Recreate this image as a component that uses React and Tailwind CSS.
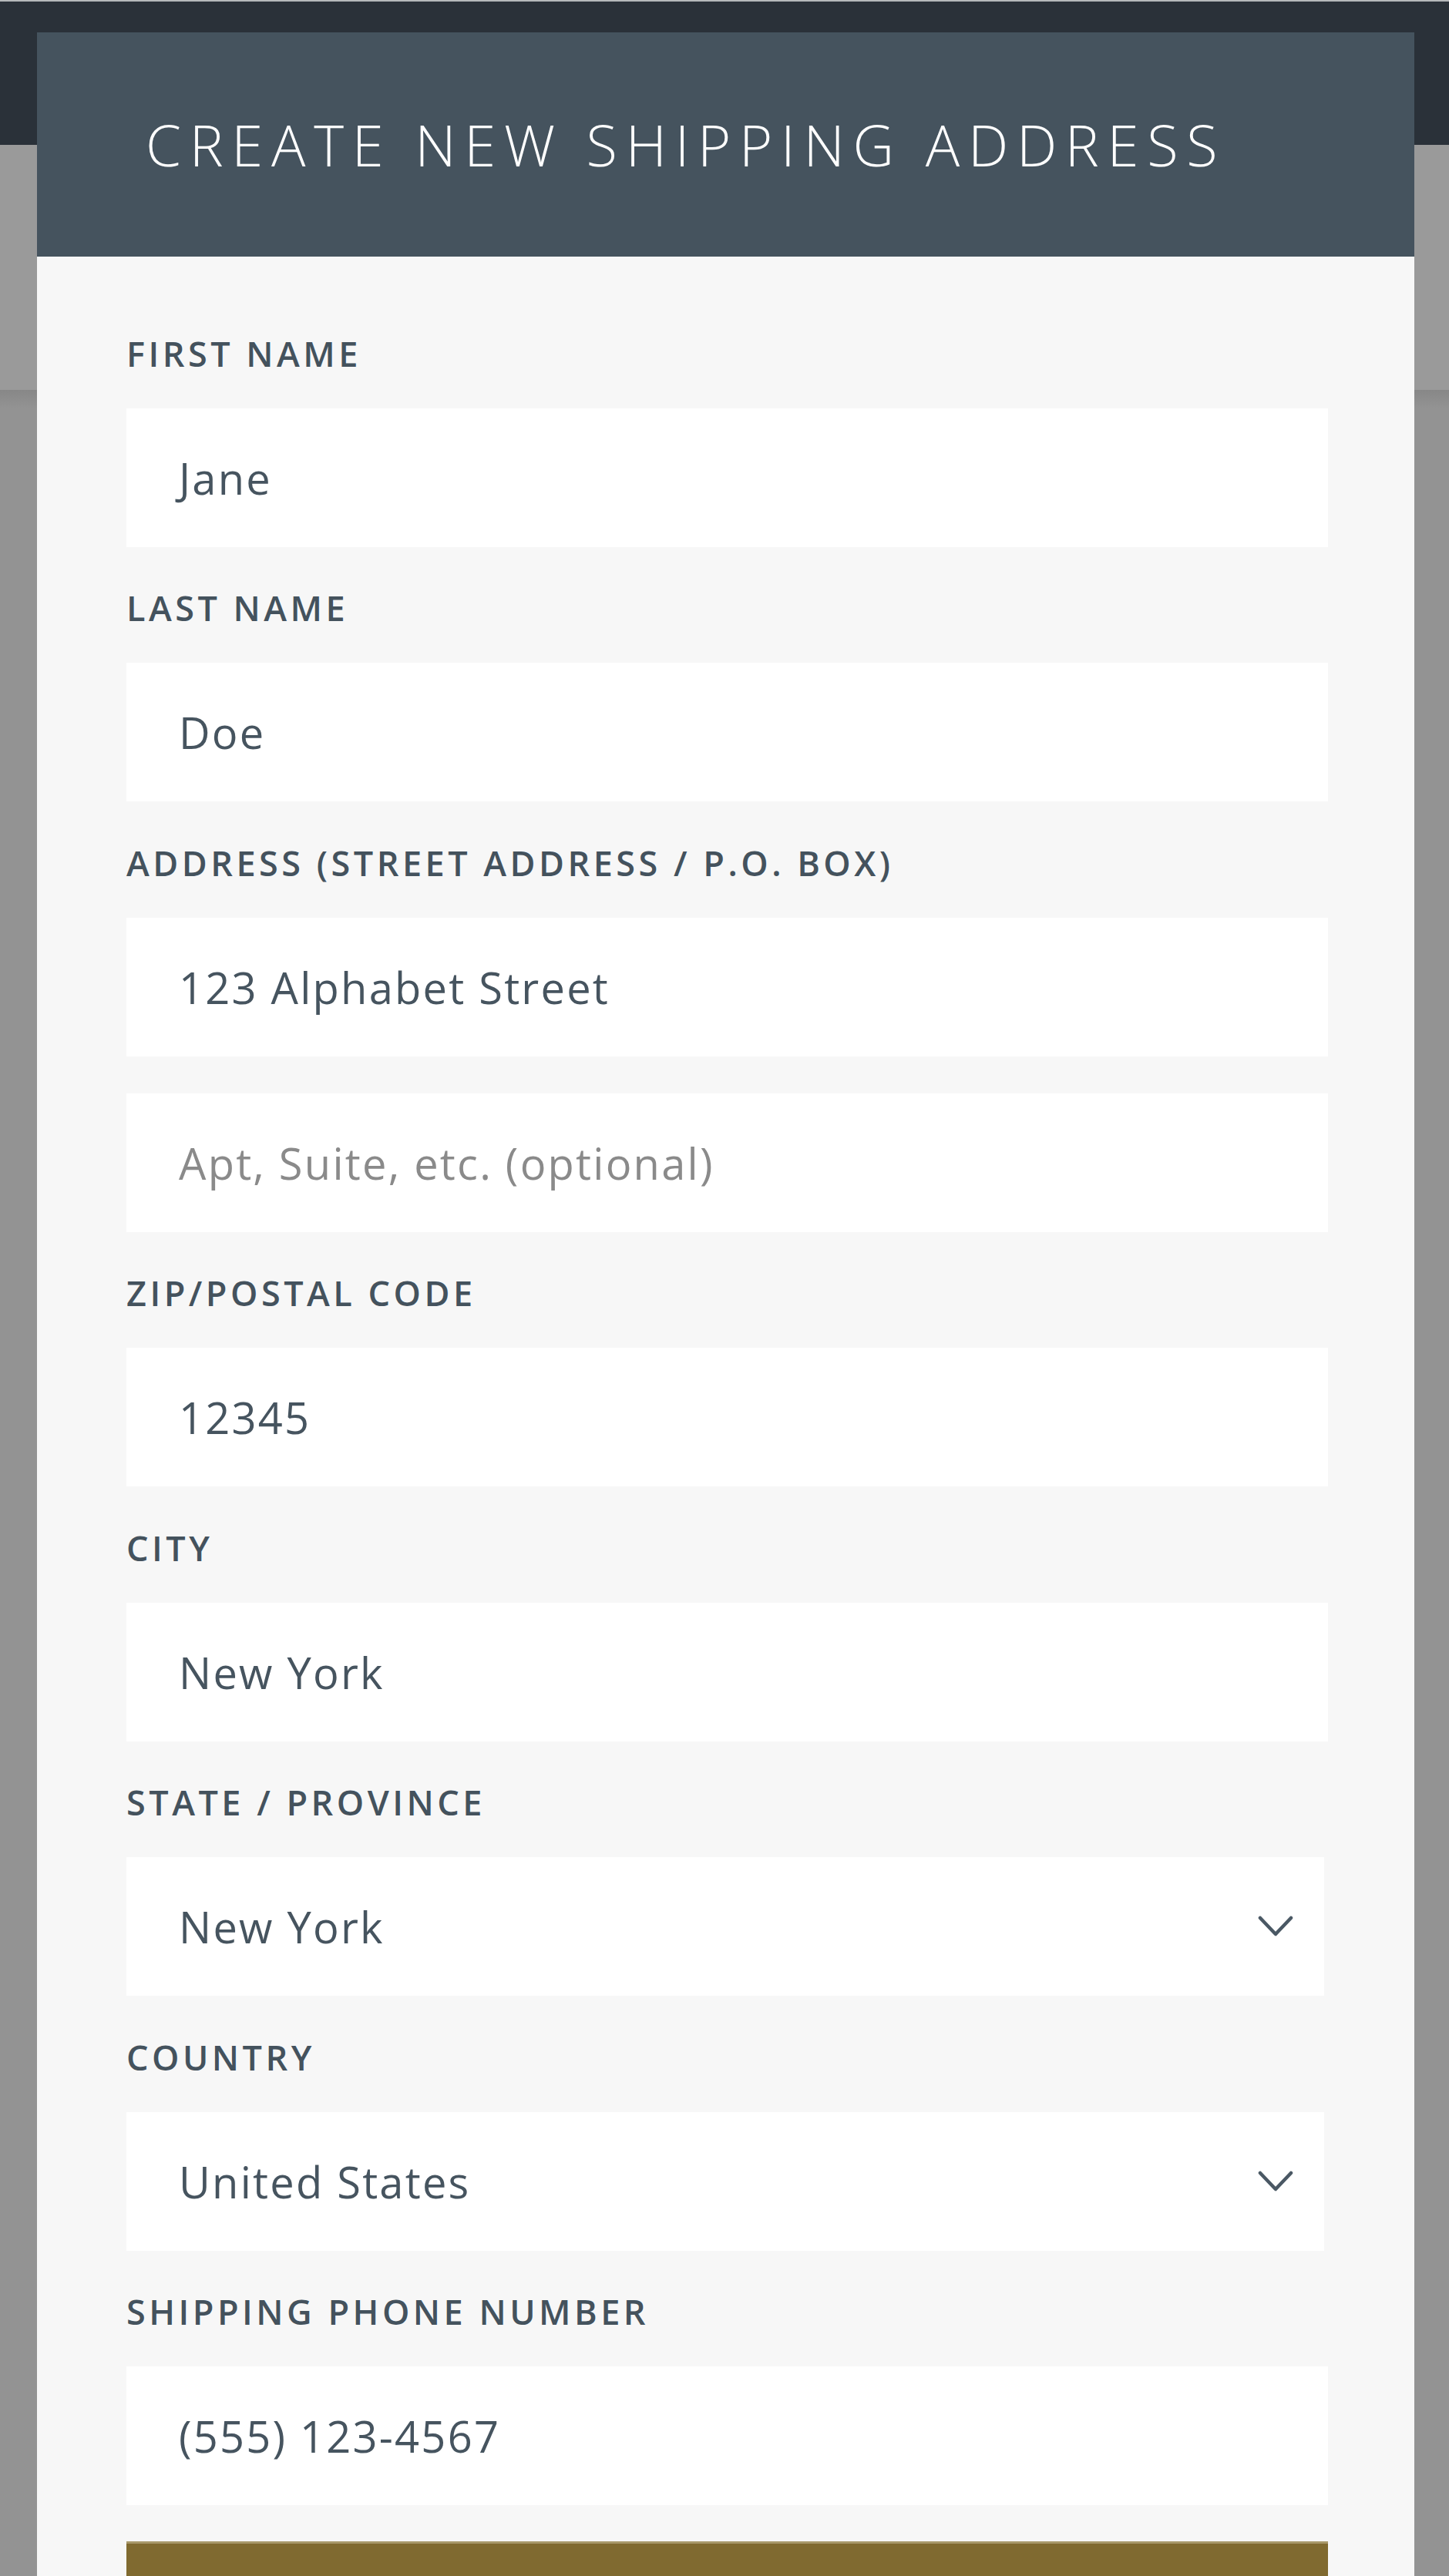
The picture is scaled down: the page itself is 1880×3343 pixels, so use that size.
import { useState } from "react";

const fields = [
  { label: "FIRST NAME", value: "Jane" },
  { label: "LAST NAME", value: "Doe" },
  { label: "ADDRESS (STREET ADDRESS / P.O. BOX)", value: "123 Alphabet Street", extra: "Apt, Suite, etc. (optional)" },
  { label: "ZIP/POSTAL CODE", value: "12345" },
  { label: "CITY", value: "New York" },
  { label: "STATE / PROVINCE", value: "New York", select: true },
  { label: "COUNTRY", value: "United States", select: true },
  { label: "SHIPPING PHONE NUMBER", value: "(555) 123-4567" },
];

function Chevron() {
  return (
    <svg width="46" height="30" viewBox="0 0 46 30" fill="none" className="shrink-0">
      <polyline points="3,4 23,25 43,4" stroke="#4a5864" strokeWidth="4.5" strokeLinecap="round" strokeLinejoin="round" />
    </svg>
  );
}

function Box({ children, placeholder, select }) {
  return (
    <div className={"h-[180px] bg-white flex items-center justify-between pl-[68px] pr-[40px] " + (select ? "mr-[5px]" : "")}>
      <span className={"text-[56px] leading-none tracking-[0.04em] " + (placeholder ? "text-[#8a8a8a]" : "text-[#46545f]")}>{children}</span>
      {select && <Chevron />}
    </div>
  );
}

function Field({ label, value, extra, select }) {
  return (
    <div className="flex flex-col">
      <div className="h-[150.5px] flex items-center pt-[8px]">
        <span className="text-[45px] font-semibold tracking-[0.1em] text-[#44525d] leading-none">{label}</span>
      </div>
      <Box select={select}>{value}</Box>
      {extra && (
        <div className="mt-[48px]">
          <Box placeholder>{extra}</Box>
        </div>
      )}
    </div>
  );
}

export default function App() {
  const [list] = useState(fields);

  return (
    <div className="relative w-[1880px] h-[3343px] overflow-hidden bg-[#939393] font-['Open_Sans',sans-serif]">
      {/* page behind the overlay */}
      <div className="flex flex-col">
        <div className="h-[2px] bg-[#b5b8bb]" />
        <div className="h-[186px] bg-[#2a3139]" />
        <div className="h-[318px] bg-[#9a9a9a]" />
        <div className="h-[24px] bg-gradient-to-b from-[#878787] to-[#939393]" />
      </div>

      {/* modal */}
      <div className="absolute left-[48px] top-[42px] w-[1787px] flex flex-col">
        <div className="h-[291px] bg-[#45535e] flex items-center pl-[141px]">
          <h1 className="text-[74px] font-light tracking-[0.145em] text-white leading-none">CREATE NEW SHIPPING ADDRESS</h1>
        </div>
        <div className="bg-[#f7f7f7] pl-[116px] pr-[112px] pt-[46px] pb-[400px] flex flex-col">
          {list.map(f => (
            <Field key={f.label} {...f} />
          ))}
          <div className="mt-[47px] h-[120px] bg-[#806a30] border-t-[3px] border-[#a8996a]" />
        </div>
      </div>
    </div>
  );
}
